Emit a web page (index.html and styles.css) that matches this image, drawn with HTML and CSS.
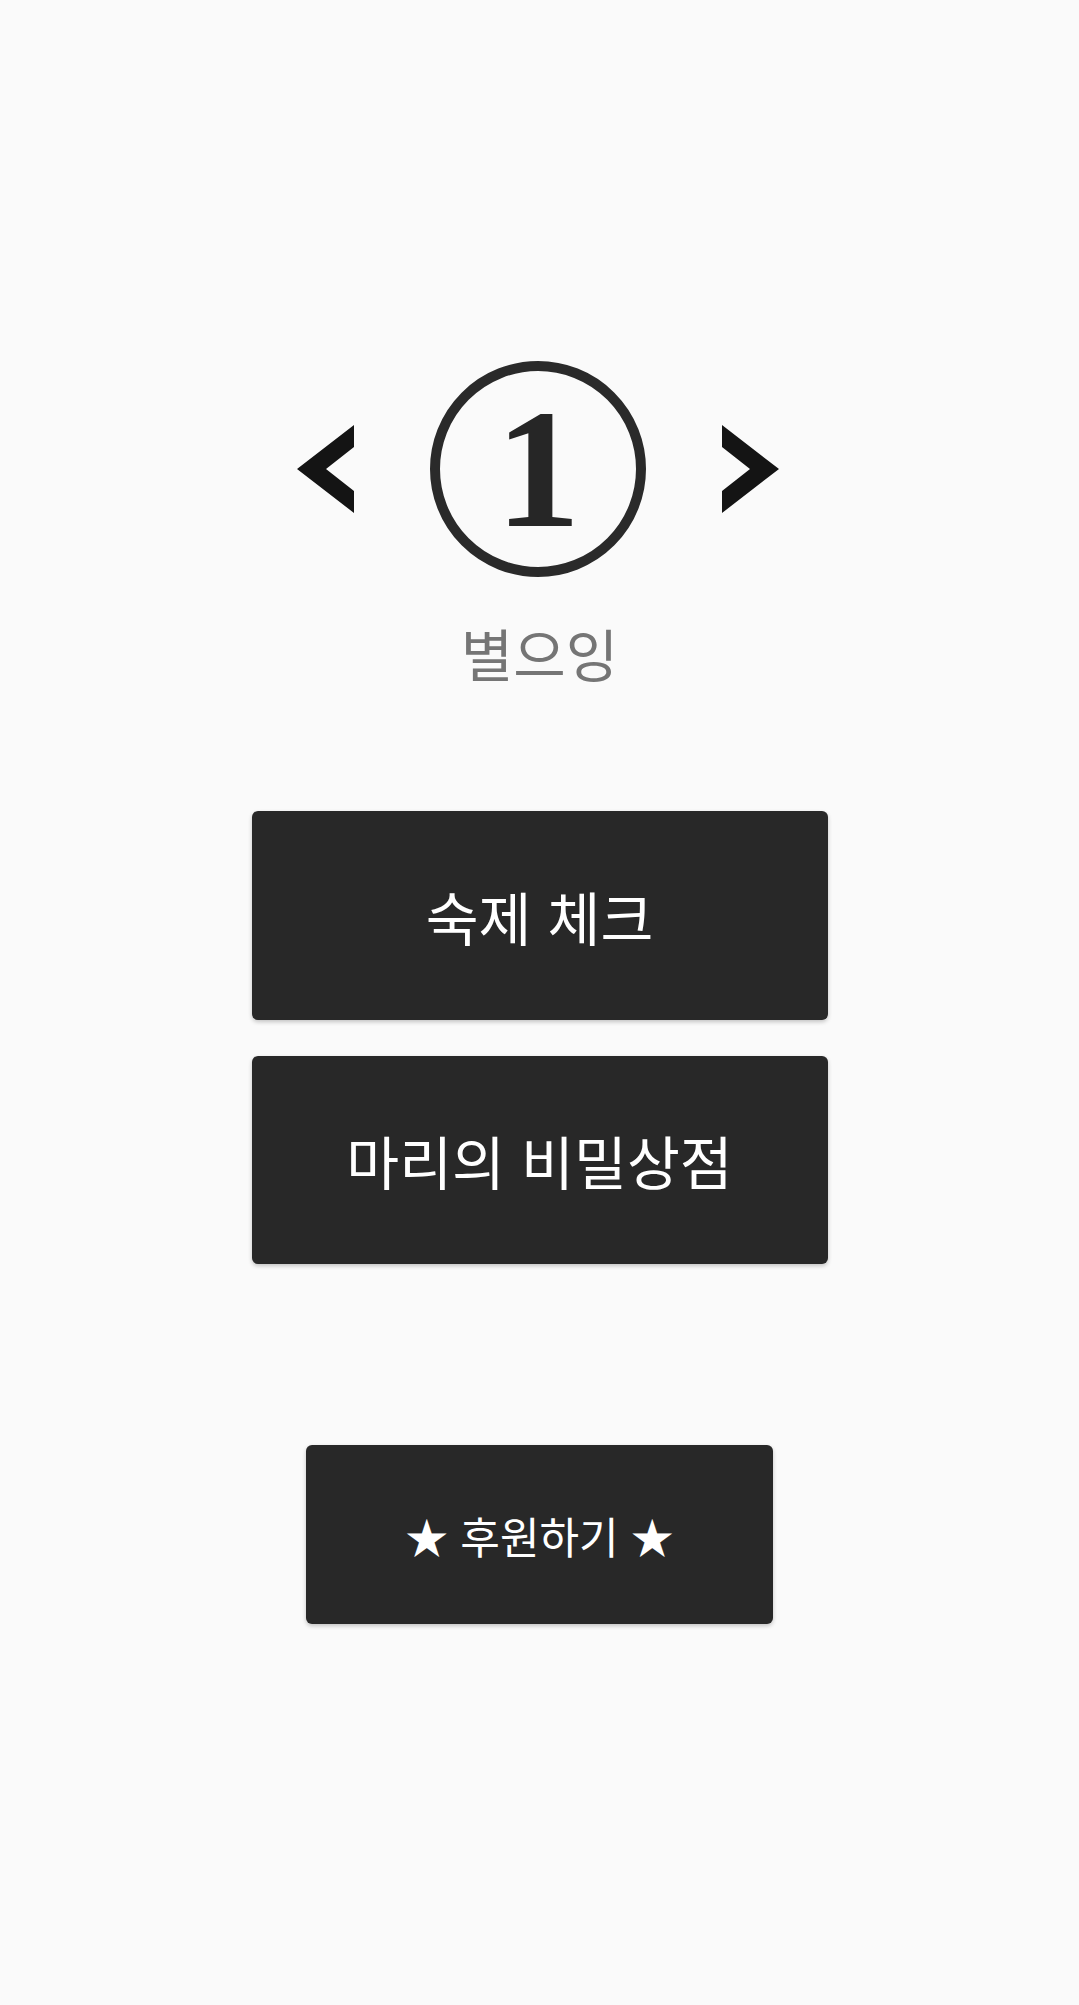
FILE: index.html
```html
<!DOCTYPE html>
<html lang="ko">
<head>
<meta charset="utf-8">
<link rel="stylesheet" href="styles.css">
</head>
<body>
<main class="screen">
  <div class="selector">
    <svg class="chev" width="57" height="88" viewBox="0 0 57 88"><polygon points="57,0 57,22 29,44 57,66 57,88 0,44" fill="#141414"/></svg>
    <div class="badge"><span class="num">1</span></div>
    <svg class="chev" width="57" height="88" viewBox="0 0 57 88"><polygon points="0,0 0,22 28,44 0,66 0,88 57,44" fill="#141414"/></svg>
  </div>
  <div class="name">별으잉</div>
  <button class="btn btn-main">숙제 체크</button>
  <button class="btn btn-main btn-second">마리의 비밀상점</button>
  <button class="btn btn-donate">★ 후원하기 ★</button>
</main>
</body>
</html>
```

FILE: styles.css
```css
html, body {
  margin: 0;
  padding: 0;
  background: #fafafa;
}
.screen {
  display: flex;
  flex-direction: column;
  align-items: center;
  padding-top: 361px;
  min-height: 2005px;
  box-sizing: border-box;
  font-family: "Noto Sans CJK KR", "Noto Sans", sans-serif;
}
.selector {
  display: flex;
  align-items: center;
  gap: 76px;
  margin-left: -3px;
}
.chev {
  display: block;
}
.badge {
  width: 216px;
  height: 216px;
  box-sizing: border-box;
  border: 10px solid #2a2a2a;
  border-radius: 50%;
  display: flex;
  align-items: center;
  justify-content: center;
}
.num {
  font-family: "Liberation Serif", serif;
  font-weight: bold;
  font-size: 170px;
  line-height: 1;
  color: #262626;
}
.name {
  margin-top: 40px;
  font-size: 57px;
  line-height: 70px;
  color: #757575;
}
.btn {
  border: none;
  border-radius: 6px;
  background: #282828;
  color: #ffffff;
  font-family: "Noto Sans CJK KR", "Noto Sans", sans-serif;
  box-shadow: 0 2px 4px rgba(0, 0, 0, 0.22);
  display: flex;
  align-items: center;
  justify-content: center;
  padding: 0;
}
.btn-main {
  width: 576px;
  height: 209px;
  font-size: 57.5px;
  margin-top: 124px;
}
.btn-second {
  margin-top: 36px;
  height: 208px;
}
.btn-donate {
  width: 467px;
  height: 179px;
  font-size: 43px;
  margin-top: 181px;
}
```
